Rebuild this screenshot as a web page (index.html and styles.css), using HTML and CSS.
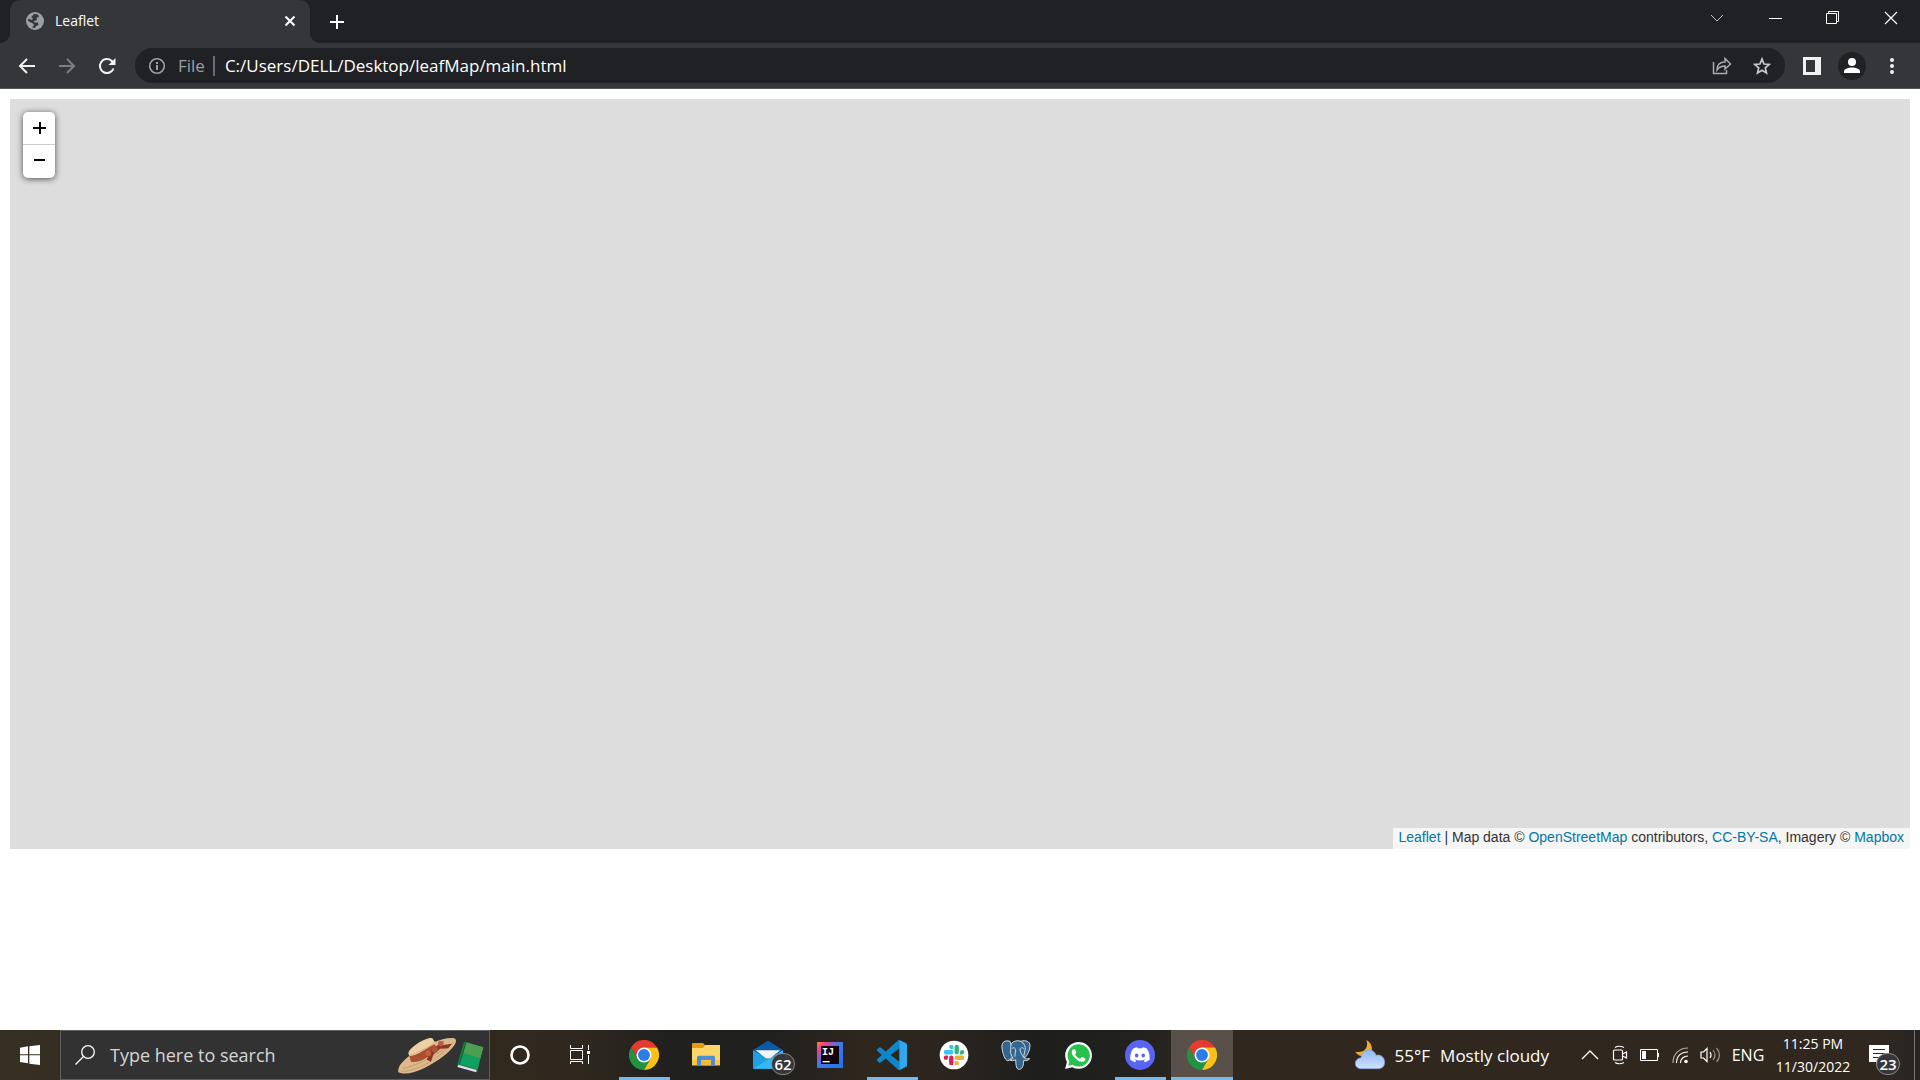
FILE: index.html
```
<!DOCTYPE html>
<html lang="en">
<head>
    <meta charset="UTF-8">
    <meta name="viewport" content="width=device-width, initial-scale=1.0">
    <title>Leaflet</title>
    <link rel="stylesheet" href="styles.css">
</head>
<body>
    <svg width="0" height="0" class="defs">
        <symbol id="chrome" viewBox="0 0 48 48">
            <path fill="#e33b2e" d="M24 12H44.8A24 24 0 0 0 3.2 12L13.6 30 24 24z"/>
            <path fill="#229342" d="M3.2 12A24 24 0 0 0 24 48L34.4 30 24 24 13.6 30z"/>
            <path fill="#fbc116" d="M24 48A24 24 0 0 0 44.8 12H24V24L34.4 30z"/>
            <circle cx="24" cy="24" r="12" fill="#fff"/>
            <circle cx="24" cy="24" r="9.5" fill="#2b7de9"/>
        </symbol>
        <symbol id="slack-bar" viewBox="0 0 24 24">
            <path d="M5.042 15.165a2.528 2.528 0 0 1-2.52 2.523A2.528 2.528 0 0 1 0 15.165a2.527 2.527 0 0 1 2.522-2.52h2.52v2.52zM6.313 15.165a2.527 2.527 0 0 1 2.521-2.52 2.527 2.527 0 0 1 2.521 2.52v6.313A2.528 2.528 0 0 1 8.834 24a2.528 2.528 0 0 1-2.521-2.522v-6.313z"/>
        </symbol>
    </svg>

    <header class="browser">
        <div class="tabs">
            <div class="tab">
                <svg class="favicon" width="18" height="18" viewBox="0 0 18 18">
                    <circle cx="9" cy="9" r="9" fill="#9aa0a6"/>
                    <path fill="#35363a" d="M8 2L12 2.500 13 5 10.500 5.500 11 8 8 9 8.500 10.500 12 10.500 12.500 13 10 14 9 16 6 15.500 8 13 7 11.500 2 9 2.500 6.500 6 8 7 6 5 5.500z"/>
                </svg>
                <span class="tab-title">Leaflet</span>
                <button class="tab-close" aria-label="Close tab">
                    <svg width="12" height="12" viewBox="0 0 12 12"><path d="M1.500 1.500l9 9M10.500 1.500l-9 9" stroke="#fff" stroke-width="2"/></svg>
                </button>
            </div>
            <button class="new-tab" aria-label="New tab">
                <svg width="16" height="16" viewBox="0 0 16 16"><path d="M8 1v14M1 8h14" stroke="#fff" stroke-width="2"/></svg>
            </button>
            <div class="window-controls">
                <button aria-label="Search tabs"><svg width="14" height="8" viewBox="0 0 14 8"><path d="M1 1l6 6 6-6" fill="none" stroke="#c4c5c7"/></svg></button>
                <button aria-label="Minimize"><svg width="14" height="14" viewBox="0 0 14 14"><path d="M1 7.500h13" stroke="#fff"/></svg></button>
                <button aria-label="Restore"><svg width="14" height="14" viewBox="0 0 14 14"><path d="M.5 2.500h10v10H.5zM2.500 2V.5h10v10H11" fill="none" stroke="#fff"/></svg></button>
                <button aria-label="Close"><svg width="14" height="14" viewBox="0 0 14 14"><path d="M1 1l12 12M13 1L1 13" stroke="#fff" stroke-width="1.2"/></svg></button>
            </div>
        </div>
        <div class="toolbar">
            <button aria-label="Back"><svg width="18" height="16" viewBox="0 0 18 16"><path d="M17 8H2M9 1L2 8l7 7" fill="none" stroke="#f1f1f2" stroke-width="2"/></svg></button>
            <button aria-label="Forward"><svg width="18" height="16" viewBox="0 0 18 16"><path d="M1 8h15M9 1l7 7-7 7" fill="none" stroke="#7d7e81" stroke-width="2"/></svg></button>
            <button aria-label="Reload"><svg width="18" height="18" viewBox="0 0 18 18"><path d="M15.500 11.500A7 7 0 1 1 13.500 3.700l1.500 1.600" fill="none" stroke="#f1f1f2" stroke-width="2"/><path d="M17.500 1v7h-7z" fill="#f1f1f2"/></svg></button>
            <div class="omnibox">
                <svg width="18" height="18" viewBox="0 0 18 18"><circle cx="9" cy="9" r="7.3" fill="none" stroke="#9aa0a6" stroke-width="1.6"/><path d="M9 8v5M9 5v2" stroke="#9aa0a6" stroke-width="2"/></svg>
                <label for="url">File</label>
                <input type="text" id="url" value="C:/Users/DELL/Desktop/leafMap/main.html">
                <button aria-label="Share"><svg width="20" height="18" viewBox="0 0 20 18"><path d="M1.500 5v11.500h13V13" fill="none" stroke="#a9aaac" stroke-width="1.5"/><path d="M5 13c0-5 3-8 8-8V1.500L18.500 7 13 12V9c-4 0-6 1-8 4z" fill="none" stroke="#a9aaac" stroke-width="1.5"/></svg></button>
                <button aria-label="Bookmark"><svg width="18" height="18" viewBox="0 0 18 18"><path d="M9 2l2 5 5.300.4-4 3.500L13.500 16 9 13.200 4.500 16l1.200-5.100-4-3.500L7 7z" fill="none" stroke="#c9cacb" stroke-width="1.7"/></svg></button>
            </div>
            <button aria-label="Side panel"><svg width="18" height="18" viewBox="0 0 18 18"><path d="M0 0h18v18H0zM3 3v12h9V3z" fill="#f1f1f2" fill-rule="evenodd"/></svg></button>
            <button aria-label="Profile"><svg width="28" height="28" viewBox="0 0 28 28"><circle cx="14" cy="14" r="14" fill="#202124"/><circle cx="14" cy="10" r="4" fill="#fff"/><path d="M6 21v-1.500c0-3 5-4 8-4s8 1 8 4V21z" fill="#fff"/></svg></button>
            <button aria-label="Menu"><svg width="4" height="18" viewBox="0 0 4 18"><circle cx="2" cy="3" r="2" fill="#f1f1f2"/><circle cx="2" cy="9" r="2" fill="#f1f1f2"/><circle cx="2" cy="15" r="2" fill="#f1f1f2"/></svg></button>
        </div>
    </header>

    <main class="page">
        <div id="map">
            <div class="zoom">
                <button aria-label="Zoom in"><svg width="14" height="14" viewBox="0 0 14 14"><path d="M8 1v12M1 7h13" stroke="#000" stroke-width="2"/></svg></button>
                <button aria-label="Zoom out"><svg width="14" height="14" viewBox="0 0 14 14"><path d="M2 5h11" stroke="#000" stroke-width="2"/></svg></button>
            </div>
            <div class="attribution"><a href="#">Leaflet</a> | Map data &copy; <a href="#">OpenStreetMap</a> contributors, <a href="#">CC-BY-SA</a>, Imagery &copy; <a href="#">Mapbox</a></div>
        </div>
    </main>

    <footer class="taskbar">
        <button class="start" aria-label="Start">
            <svg width="20" height="20" viewBox="0 0 60 60"><path fill="#fff" d="M0 8l24-4v24H0zM28 3.500L60 0v28H28zM0 31h24v24L0 51zM28 31h32v29l-32-4z"/></svg>
        </button>
        <div class="search">
            <svg width="20" height="20" viewBox="0 0 20 20"><circle cx="13" cy="7" r="6.3" fill="none" stroke="#fff" stroke-width="1.3"/><path d="M8.500 11.500L.5 19.500" stroke="#fff" stroke-width="1.3"/></svg>
            <input type="text" aria-label="Search" placeholder="Type here to search">
            <!-- straw hat and book -->
            <svg width="88" height="40" viewBox="50 45 264 120">
                <path fill="#dcb98c" d="M54 157C50 137 72 119 98 99 140 74 190 50 222 55 235 62 222 82 190 108 150 138 88 172 54 157z"/>
                <path fill="none" stroke="#b88f63" stroke-width="2" d="M62 153C100 158 165 125 219 66M68 145C85 142 160 120 208 70"/>
                <path fill="#a94f32" d="M86 105L158 68 172 84C150 112 115 130 92 125z"/>
                <path fill="#efd0a4" d="M84 101C85 83 140 49 156 55L166 70C145 82 105 110 88 108z"/>
                <path fill="none" stroke="#c79d70" stroke-width="2" d="M89 105C105 103 145 82 163 67"/>
                <path fill="#8d3625" d="M152 91L190 62 188 75 215 71 204 85 180 86 159 104 152 125 139 119z"/>
                <circle cx="144" cy="100" r="9" fill="#bd6041"/><circle cx="164" cy="89" r="9" fill="#b25339"/><circle cx="181" cy="71" r="8" fill="#b95b3e"/>
                <path fill="#157f48" d="M251 66L231 133 237 139 291 157 307 84z"/>
                <path fill="#e4d8f2" d="M234 134L289 150 287 157 231 141z"/>
                <path fill="#10a060" d="M257 67L309 82 291 148 237 132z"/>
                <path fill="#4e9e50" d="M257 67L309 82 300 115 250 99z"/>
                <path stroke="#0c6238" stroke-width="3" d="M257 67L237 132"/>
            </svg>
        </div>
        <button class="start" aria-label="Cortana"><svg width="20" height="20" viewBox="0 0 20 20"><circle cx="10" cy="10" r="8.5" fill="none" stroke="#fff" stroke-width="2.6"/></svg></button>
        <button class="start" aria-label="Task view"><svg width="20" height="20" viewBox="0 0 20 20"><path d="M.5 0v3.500h12V0M.5 5.500h12v9H.5zM.5 19v-2.500h12V19M18.500 0v5M18.500 10v9" fill="none" stroke="#fff"/><path fill="#fff" d="M17 6h3v3h-3z"/></svg></button>

        <div class="apps">
            <button class="app open" aria-label="Chrome"><svg width="30" height="30"><use href="#chrome"/></svg></button>
            <button class="app" aria-label="File Explorer">
                <svg width="28" height="24" viewBox="0 0 84 72">
                    <path fill="#e79a10" d="M0 4Q0 0 4 0H33l6 6V22H0z"/>
                    <path fill="#ffd667" d="M0 15H33L40 6H84V67H0z"/>
                    <path fill="#fbc646" d="M0 50H84V67H0z"/>
                    <path fill="#4a90d0" d="M15 69V43q0-5 5-5H64q5 0 5 5V69H57V51H28V69z"/>
                    <path fill="#f4b93c" d="M28 54H57V67H28z"/>
                </svg>
            </button>
            <button class="app" aria-label="Mail">
                <svg width="30" height="30" viewBox="0 0 90 90">
                    <path fill="#0b5aa6" d="M0 30L45 2 90 30V50H0z"/>
                    <path fill="#1ea0e8" d="M0 31L90 86H0z"/>
                    <path fill="#35b8f5" d="M90 31L0 86H90z"/>
                    <path fill="#f1f3f5" d="M8 31H82L53 54Q45 59 37 54z"/>
                </svg>
                <span class="badge">62</span>
            </button>
            <button class="app" aria-label="IntelliJ IDEA">
                <svg width="26" height="26" viewBox="0 0 78 78">
                    <linearGradient id="ij" x2="1" y2="1"><stop offset="0" stop-color="#fd7b3c"/><stop offset=".2" stop-color="#e8418f"/><stop offset=".45" stop-color="#417ae8"/><stop offset="1" stop-color="#1c75f5"/></linearGradient>
                    <path fill="url(#ij)" d="M0 0H78V78H0z"/>
                    <path fill="#12030f" d="M12 12H66V66H12z"/>
                    <text x="15" y="39" class="ij-text">IJ</text>
                    <path fill="#fff" d="M17 57H38V61H17z"/>
                </svg>
            </button>
            <button class="app open" aria-label="Visual Studio Code">
                <svg width="30" height="30" viewBox="0 0 24 24">
                    <path fill="#0f86cc" d="M23.15 2.587L18.21.21a1.494 1.494 0 0 0-1.705.29l-9.46 8.63-4.12-3.128a.999.999 0 0 0-1.276.057L.327 7.261A1 1 0 0 0 .326 8.74L3.899 12 .326 15.26a1 1 0 0 0 .001 1.479L1.65 17.94a.999.999 0 0 0 1.276.057l4.12-3.128 9.46 8.63a1.492 1.492 0 0 0 1.704.29l4.942-2.377A1.5 1.5 0 0 0 24 20.06V3.939a1.5 1.5 0 0 0-.85-1.352zm-5.146 14.861L10.826 12l7.178-5.448v10.896z"/>
                    <path fill="#2fa8ee" d="M18 .1l5.15 2.487A1.5 1.5 0 0 1 24 3.939V20.06a1.5 1.5 0 0 1-.85 1.352L18 23.9z"/>
                </svg>
            </button>
            <button class="app" aria-label="Slack">
                <svg width="30" height="30" viewBox="0 0 90 90">
                    <circle cx="45" cy="45" r="43" fill="#fff"/>
                    <use href="#slack-bar" x="14" y="14" width="62" height="62" fill="#e01e5a"/>
                    <use href="#slack-bar" x="14" y="14" width="62" height="62" fill="#36c5f0" transform="rotate(90 45 45)"/>
                    <use href="#slack-bar" x="14" y="14" width="62" height="62" fill="#2eb67d" transform="rotate(180 45 45)"/>
                    <use href="#slack-bar" x="14" y="14" width="62" height="62" fill="#ecb22e" transform="rotate(270 45 45)"/>
                </svg>
            </button>
            <button class="app" aria-label="PostgreSQL">
                <svg width="30" height="30" viewBox="0 0 90 90">
                    <g fill="#336791" stroke="#d5dbe0" stroke-width="3" stroke-linejoin="round">
                        <path d="M27 4C10-1 1 8 3 24c2 17 9 37 17 38 6 1 8-8 13-9l9-2z"/>
                        <path d="M58 4c17-5 29 1 29 12 0 15-8 29-15 37l-12 2z"/>
                        <path d="M44 3c14-3 25 4 29 20 0 12-6 20-4 30 5 5 10 3 17 3-3 6-12 7-18 5 0 13-3 26-12 27-10 1-11-10-12-29-6 4-13 3-18 1 5-1 10-3 10-6C27 42 28 30 29 22 30 10 34 5 44 3z"/>
                        <path fill="none" d="M31 27c5-6 12-4 13 3 0 8-3 13-2 20M69 26c-6-5-12-3-12 3 1 9 6 15 11 24"/>
                    </g>
                </svg>
            </button>
            <button class="app" aria-label="WhatsApp">
                <svg width="27" height="27" viewBox="0 0 24 24">
                    <path fill="#fff" d="M.1 24l1.600-6.200A11.900 11.900 0 1 1 6.400 22.400z"/>
                    <path fill="#27c24c" d="M2.900 21.200l1-3.800A9.900 9.900 0 1 1 6.700 20.200z"/>
                    <path fill="#fff" d="M17.472 14.382c-.297-.149-1.758-.867-2.03-.967-.273-.099-.471-.148-.67.15-.197.297-.767.966-.94 1.164-.173.199-.347.223-.644.075-.297-.15-1.255-.463-2.39-1.475-.883-.788-1.48-1.761-1.653-2.059-.173-.297-.018-.458.13-.606.134-.133.298-.347.446-.52.149-.174.198-.298.298-.497.099-.198.05-.371-.025-.52-.075-.149-.669-1.612-.916-2.207-.242-.579-.487-.5-.669-.51-.173-.008-.371-.01-.57-.01-.198 0-.52.074-.792.372-.272.297-1.04 1.016-1.04 2.479 0 1.462 1.065 2.875 1.213 3.074.149.198 2.096 3.2 5.077 4.487.709.306 1.262.489 1.694.625.712.227 1.36.195 1.871.118.571-.085 1.758-.719 2.006-1.413.248-.694.248-1.289.173-1.413-.074-.124-.272-.198-.57-.347"/>
                </svg>
            </button>
            <button class="app open" aria-label="Discord">
                <svg width="30" height="30" viewBox="0 0 90 90">
                    <circle cx="45" cy="45" r="45" fill="#5865f2"/>
                    <path fill="#fff" transform="translate(15.5 15) scale(2.45)" d="M20.317 4.37a19.79 19.79 0 00-4.885-1.515.074.074 0 00-.079.037c-.211.375-.445.865-.608 1.25-1.845-.276-3.68-.276-5.487 0-.164-.393-.406-.874-.618-1.25a.077.077 0 00-.079-.037 19.74 19.74 0 00-4.885 1.515.07.07 0 00-.032.028C.533 9.046-.319 13.58.099 18.058a.082.082 0 00.031.056c2.053 1.508 4.041 2.423 5.993 3.029a.078.078 0 00.084-.028c.462-.63.873-1.295 1.226-1.994a.076.076 0 00-.042-.106c-.653-.248-1.274-.55-1.872-.892a.077.077 0 01-.008-.128c.126-.094.252-.192.372-.291a.074.074 0 01.078-.011c3.928 1.793 8.18 1.793 12.061 0a.074.074 0 01.079.01c.12.099.246.198.373.292a.077.077 0 01-.007.128 12.3 12.3 0 01-1.873.891.077.077 0 00-.041.107c.36.698.772 1.363 1.225 1.993a.076.076 0 00.084.029c1.961-.607 3.95-1.522 6.002-3.029a.077.077 0 00.031-.055c.5-5.177-.838-9.674-3.549-13.66a.061.061 0 00-.031-.029zM8.02 15.331c-1.183 0-2.157-1.086-2.157-2.419 0-1.333.956-2.419 2.157-2.419 1.211 0 2.176 1.095 2.157 2.419 0 1.333-.956 2.419-2.157 2.419zm7.975 0c-1.183 0-2.157-1.086-2.157-2.419 0-1.333.955-2.419 2.157-2.419 1.211 0 2.176 1.095 2.157 2.419 0 1.333-.946 2.419-2.157 2.419z"/>
                </svg>
            </button>
            <button class="app open active" aria-label="Chrome, Leaflet"><svg width="30" height="30"><use href="#chrome"/></svg></button>
        </div>

        <button class="weather">
            <svg width="30" height="30" viewBox="0 0 90 90">
                <linearGradient id="cloud" x2="0" y2="1"><stop offset="0" stop-color="#8db7f3"/><stop offset="1" stop-color="#cfe1fb"/></linearGradient>
                <path fill="#f2a92c" d="M34 0C55 10 57 40 36 47 24 51 8 48 1 35 24 41 43 25 34 0z"/>
                <path fill="url(#cloud)" stroke="#7ea9ea" stroke-width="2" d="M18 86C5 86 1 77 1 70 1 60 10 54 18 54 20 38 30 30 42 30 53 30 60 36 63 46 78 42 89 53 89 67 89 78 82 86 70 86z"/>
            </svg>
            <span>55°F</span>
            <span>Mostly cloudy</span>
        </button>

        <div class="tray">
            <button aria-label="Show hidden icons"><svg width="18" height="10" viewBox="0 0 18 10"><path d="M1 9l8-8 8 8" fill="none" stroke="#fff" stroke-width="1.3"/></svg></button>
            <button aria-label="Meet now"><svg width="16" height="20" viewBox="0 0 16 20"><path d="M3 2.500Q7 0 12 2.500M3 17.500Q7 20 12 17.500M2.500 5h7q1 0 1 1v8q0 1-1 1h-7q-1 0-1-1V6q0-1 1-1zM10.500 9l4-2v6l-4-2" fill="none" stroke="#fff" stroke-width="1.2"/></svg></button>
            <button aria-label="Battery"><svg width="20" height="12" viewBox="0 0 20 12"><path d="M.5.5h17v11H.5zM18.500 4v4" fill="none" stroke="#fff"/><path d="M2 2h4v8H2z" fill="#fff"/></svg></button>
            <button aria-label="Wi-Fi"><svg width="17" height="17" viewBox="0 0 17 17"><g fill="none" stroke="#fff" stroke-width="1.2"><path opacity=".6" d="M1 16C1 7 7 1 16 1"/><path d="M4.500 16C4.500 9 9 5 16 5M8.500 16c0-4 3-7 7.500-7"/></g><circle cx="14" cy="14.5" r="1.8" fill="#fff"/></svg></button>
            <button aria-label="Volume"><svg width="21" height="18" viewBox="0 0 21 18"><g fill="none" stroke="#fff" stroke-width="1.2"><path d="M1 6h2.500L7 2.500v13L3.500 12H1zM10 6q2 3 0 6"/><path opacity=".5" d="M13 4q4 5 0 10M16.500 2q6 7 0 14"/></g></svg></button>
            <button class="lang">ENG</button>
            <button class="clock">11:25 PM<br>11/30/2022</button>
            <button class="notifications" aria-label="Notifications">
                <svg width="20" height="20" viewBox="0 0 20 20"><path fill="#fff" d="M0 0h20v17h-9l-4 3v-3H0z"/><path d="M4 4.500h12M4 8.500h12M4 12.500h8" stroke="#30281f"/></svg>
                <span class="badge">23</span>
            </button>
        </div>
    </footer>
</body>
</html>
```
FILE: styles.css
```
*{
    box-sizing: border-box;
}

body{
    margin: 0;
    height: 100vh;
    display: flex;
    flex-direction: column;
    background: #fff;
    color: #fff;
    font-family: "Open Sans", "Noto Sans", sans-serif;
    font-size: 16px;
}

button{
    display: flex;
    align-items: center;
    justify-content: center;
    padding: 0;
    border: 0;
    background: none;
    color: inherit;
    font: inherit;
}

input{
    flex: 1;
    min-width: 0;
    padding: 0;
    border: 0;
    outline: 0;
    background: none;
    color: inherit;
    font: inherit;
}

svg{
    flex: none;
}

.defs{
    position: absolute;
}

/* browser */
.browser{
    background: #35363a;
    border-bottom: 1px solid #55565a;
}

.tabs{
    display: flex;
    height: 43px;
    padding-left: 10px;
    background: #202124;
}

.tab{
    position: relative;
    display: flex;
    align-items: center;
    width: 300px;
    padding: 0 14px 2px 16px;
    border-radius: 10px 10px 0 0;
    background: #35363a;
    font-size: 14px;
}

/* curved feet of the tab */
.tab::before,
.tab::after{
    content: "";
    position: absolute;
    bottom: 0;
    width: 10px;
    height: 10px;
}

.tab::before{
    right: 100%;
    background: radial-gradient(circle at 0 0, #202124 10px, #35363a 10px);
}

.tab::after{
    left: 100%;
    background: radial-gradient(circle at 100% 0, #202124 10px, #35363a 10px);
}

.tab-title{
    flex: 1;
    padding-left: 11px;
}

.new-tab{
    width: 54px;
}

.window-controls{
    display: flex;
    height: 36px;
    margin-left: auto;
}

.window-controls button{
    width: 58px;
}

.toolbar{
    display: flex;
    align-items: center;
    height: 45px;
    padding: 0 8px 0 7px;
}

.toolbar button{
    width: 40px;
    height: 35px;
}

.omnibox{
    flex: 1;
    display: flex;
    align-items: center;
    height: 35px;
    margin: 0 7px 0 8px;
    padding: 0 3px 0 13px;
    border-radius: 18px;
    background: #202124;
    font-size: 17px;
}

.omnibox label{
    margin: 0 10px 0 12px;
    padding-right: 8px;
    border-right: 2px solid #6b6d71;
    color: #9aa0a6;
    line-height: 20px;
}

/* page */
.page{
    flex: 1;
    padding: 10px;
}

#map{
    position: relative;
    height: 750px;
    background: #ddd;
}

.zoom{
    position: absolute;
    top: 13px;
    left: 13px;
    width: 32px;
    border-radius: 5px;
    background: #fff;
    box-shadow: 0 1px 6px rgba(0, 0, 0, 0.65);
}

.zoom button{
    width: 32px;
    height: 33px;
}

.zoom button:first-child{
    border-bottom: 1px solid #ccc;
}

.attribution{
    position: absolute;
    right: 0;
    bottom: 0;
    padding: 0 6px 2px;
    background: rgba(255, 255, 255, 0.7);
    color: #333;
    font-family: "Liberation Sans", Arial, sans-serif;
    font-size: 14px;
    line-height: 19px;
}

.attribution a{
    color: #0078a8;
    text-decoration: none;
}

/* taskbar */
.taskbar{
    display: flex;
    height: 50px;
    background: linear-gradient(90deg, #353022 0%, #30281e 30%, #20201f 35%, #20201f 40%, #2e271d 45%, #2b251d 49%, #1e1e1d 54%, #20201f 58%, #30281e 64%, #30281f 98%, #262523 100%);
}

.start{
    width: 60px;
}

.search{
    display: flex;
    align-items: center;
    width: 430px;
    padding: 0 4px 0 14px;
    border: 1px solid #5c5c5c;
    background: #323232;
    font-size: 18px;
}

.search input{
    margin-left: 15px;
}

.search input::placeholder{
    color: #d6d6d6;
    opacity: 1;
}

.apps{
    display: flex;
    margin-left: 3px;
}

.app{
    position: relative;
    width: 62px;
}

.app.open::after{
    content: "";
    position: absolute;
    right: 5px;
    bottom: 0;
    left: 6px;
    height: 3px;
    background: #76b9ed;
}

.app.active{
    background: #595049;
}

.app.active::after{
    right: 0;
    left: 0;
}

.badge{
    position: absolute;
    right: 4px;
    bottom: 5px;
    width: 24px;
    height: 22px;
    border: 1px solid #8a8a8a;
    border-radius: 12px;
    background: #35373a;
    font-size: 15px;
    font-weight: 600;
    line-height: 20px;
    text-align: center;
}

.ij-text{
    fill: #fff;
    font-family: "Liberation Mono", monospace;
    font-size: 30px;
    font-weight: bold;
}

.weather{
    gap: 10px;
    margin-left: auto;
    font-size: 17px;
}

.tray{
    display: flex;
    margin-left: 26px;
    padding-right: 5px;
}

.tray button{
    width: 30px;
}

.tray .lang{
    width: 46px;
}

.tray .clock{
    width: 84px;
    font-size: 14px;
    line-height: 23px;
}

.tray .notifications{
    position: relative;
    width: 60px;
    padding-right: 12px;
    border-right: 1px solid #77736d;
}

.notifications .badge{
    right: 14px;
}
```
